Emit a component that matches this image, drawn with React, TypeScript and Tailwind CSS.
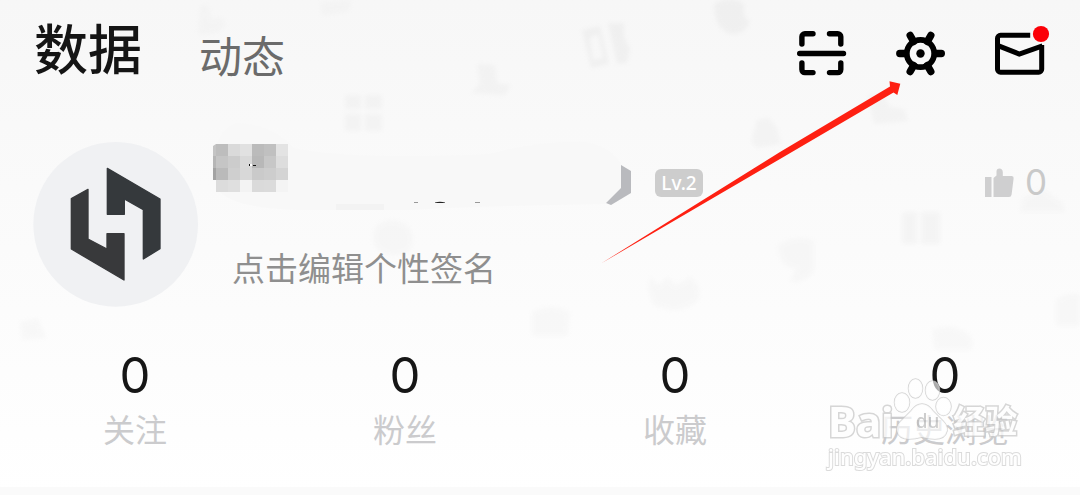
import type { ReactNode } from "react";

const stats = [
  { label: "关注", value: 0 },
  { label: "粉丝", value: 0 },
  { label: "收藏", value: 0 },
  { label: "历史浏览", value: 0 },
];

function Backdrop() {
  return (
    <svg viewBox="0 0 1080 495" className="absolute inset-x-0 top-0 w-full" aria-hidden="true">
      <defs>
        <filter id="soft">
          <feGaussianBlur stdDeviation="2" />
        </filter>
      </defs>
      <g fill="#e6e6e6" opacity="0.2" filter="url(#soft)">
        <path d="M200 5l8 0 4 14 10-2 4 8-8 8-20 2z" />
        <path d="M320 2l32-2-4 12-26 4z" />
        <path d="M345 95h16v14h-16zM365 95h17v14h-17zM345 114h16v17h-16zM365 114h17v17h-17z" fill="#dcdcdc" />
        <path d="M477 64l18 1 2 18 14 2-6 10-34-2 9-9z" fill="#dcdcdc" />
        <path d="M582 30l18-4 9 38-18 4zM590 38l3 22 10-2-5-24zM608 23h16v14l6 12-3 14-10 1z" fillRule="evenodd" fill="#d2d2d2" />
        <path d="M714 4q16-10 30 0v12l6 6q-6 14-20 12-16-6-16-30z" fill="#d2d2d2" />
        <path d="M757 120l12-2 8 10 4 16-24 4-6-6z" fill="#dcdcdc" />
        <path d="M868 95l14-2 8 14 14 2 4 12-34 3z" fill="#dcdcdc" />
        <path d="M902 212h15v32h-15zM921 212h19v32h-19z" fill="#dcdcdc" />
        <path d="M778 245q20-12 36-4v30q-10 14-24 10l6-12q-18-2-18-24z" />
        <path d="M650 277l8 8 10-8 8 8 14-8q14 10 8 24-20 16-44 4-8-12-4-28z" />
        <path d="M376 226q16-12 32 0 10 14 0 26-20 8-32-4-6-10 0-22z" />
        <path d="M532 312q20-10 38 0l-2 24h-36z" />
        <path d="M20 322l18-4 8 20-24 2z" />
        <path d="M1056 300q10-8 24-6v32h-24z" />
        <path d="M932 330q24-10 40 8v12h-38z" />
        <path d="M1022 198l20-10 20 14 4 10h-46z" />
      </g>
    </svg>
  );
}

function ScanIcon() {
  return (
    <svg viewBox="0 0 50 50" className="size-[50px]" fill="none" stroke="#000" strokeWidth="5.4" strokeLinecap="round" aria-hidden="true">
      <path d="M4.9 16V8.7a3 3 0 0 1 3-3H16M32.5 5.7h8.3a3 3 0 0 1 3 3V16M43.8 35v6.6a3 3 0 0 1-3 3h-8.3M16 44.6H7.9a3 3 0 0 1-3-3V35M2.7 25.5h43.8" />
    </svg>
  );
}

function GearIcon() {
  return (
    <svg viewBox="0 0 50 50" className="size-[50px]" fill="none" stroke="#000" aria-hidden="true">
      <path
        d="M3.8 25.500H9M40 25.500h5.300M14.200 7.500l3.400 6M34.800 7.500l-3.400 6M14.200 43.500l3.400-6M34.800 43.500l-3.400-6"
        strokeWidth="7.4"
        strokeLinecap="round"
      />
      <circle cx="24.5" cy="25.5" r="13.7" strokeWidth="5.8" />
      <circle cx="24.5" cy="25.5" r="4.2" fill="#000" stroke="none" />
    </svg>
  );
}

function MailIcon() {
  return (
    <svg viewBox="0 0 50 50" className="size-[50px] overflow-visible" fill="none" stroke="#000" strokeWidth="5" aria-hidden="true">
      <path d="M35.2 7.3H5.5a3 3 0 0 0-3 3v30.900a3 3 0 0 0 3 3h38.200a3 3 0 0 0 3-3V17" />
      <path d="M3 17.600l21.300 8.400L47.500 17.800" />
      <circle cx="46" cy="6" r="8.1" fill="#fb0007" stroke="none" />
    </svg>
  );
}

function IconButton({ label, children }: { label: string; children: ReactNode }) {
  return (
    <button type="button" aria-label={label} className="shrink-0">
      {children}
    </button>
  );
}

function Avatar() {
  return (
    <svg viewBox="39 37 495 495" className="size-[165px] shrink-0" role="img" aria-label="头像">
      <circle cx="287" cy="284" r="247" fill="#f0f1f3" />
      <g strokeWidth="4" strokeLinejoin="round">
        <path d="M262 116L420 208V357L370 388V240L313 208V254H262z" fill="#35393c" stroke="#35393c" />
        <path d="M204 179V328L261 358V312H312V451L154 358V207z" fill="#38393b" stroke="#38393b" />
      </g>
    </svg>
  );
}

const mosaic = [
  ["#bdbdbd", "#dadada", "#e1e1e1", "#bbbbbb", "#c0c0c0", "#e3e3e3"],
  ["#c5c5c5", "#cccccc", "#d9d9d9", "#b8b8b8", "#c7c7c7", "#dddddd"],
  ["#bababa", "#cfcfcf", "#d8d8d8", "#cacaca", "#cdcdcd", "#d4d4d4"],
  ["#dcdcdc", "#dfdfdf", "#f3f3f3", "#dadada", "#dbdbdb", "#f4f4f4"],
];

function MaskedName() {
  return (
    <svg viewBox="0 0 440 90" className="h-[90px] w-[440px] shrink-0" aria-hidden="true">
      <path
        d="M14 34Q20 6 38 3Q72 4 94 28Q150 40 290 34Q340 20 385 22Q412 26 424 48V66L406 84Q280 86 210 90H130Q40 92 20 72Q12 56 14 34z"
        fill="#f8f8f8"
      />
      <path d="M136 84h48v6h-48z" fill="#f3f3f3" />
      <path d="M421 45L431 51V73L411 85L406 83L421 68z" fill="#b9babe" />
      <path d="M13 26l3-2v12h-3z" fill="#c4c4c4" />
      <path d="M13 36h3v12h-3z" fill="#b6b6b6" />
      <path d="M13 48h3v12h-3z" fill="#a3a3a3" />
      {mosaic.map((row, y) =>
        row.map((color, x) => (
          <rect key={`${x}-${y}`} x={16 + x * 12} y={24 + y * 12} width="12" height="12" fill={color} />
        ))
      )}
      <path d="M49 44h1v2h-1zM53 45h3v1h-3z" fill="#111" />
      <path d="M50 44h2v2h-2z" fill="#fff" />
      <path d="M214 82h4v1h-4zM275 82h5v1h-5z" fill="#999" />
      <path d="M235 82.500q5-1.500 10 0v.5h-10z" fill="#222" />
    </svg>
  );
}

function ThumbIcon() {
  return (
    <svg viewBox="0 0 30 32" className="h-8 w-[30px]" fill="#cfcfd0" aria-hidden="true">
      <path d="M0 11h6.500v20H0z" />
      <path d="M8.500 12l3-2.500V5.500q0-3 3-3t3.300 3.500V10h9q2.200.3 1.800 2.500l-2 16q-.4 2.500-2.600 2.500H8.500z" />
    </svg>
  );
}

function Arrow() {
  return (
    <svg viewBox="0 0 1080 495" className="pointer-events-none absolute inset-x-0 top-0 w-full" aria-hidden="true">
      <path d="M601 263.500L780 152L890 86.500L889.500 81.200L900.300 83.800L897.300 95L893.500 92.500L780 159Z" fill="#fe2012" />
    </svg>
  );
}

function Watermark() {
  return (
    <div
      aria-hidden="true"
      className="pointer-events-none absolute right-[59px] bottom-[26px] w-[193px] font-['Noto_Sans','Noto_Sans_CJK_SC',sans-serif] font-bold whitespace-nowrap text-white opacity-75 [-webkit-text-stroke:3px_#c9c9c9] [paint-order:stroke_fill]"
    >
      <svg viewBox="0 0 60 66" className="absolute -top-6 left-[64px] h-[66px] w-[60px]" fill="#fff" fillOpacity="0.85" stroke="#c6c6c6" strokeWidth="1.500">
        <ellipse cx="10" cy="27.500" rx="7.500" ry="9.500" />
        <ellipse cx="23.500" cy="13.500" rx="7" ry="9.500" />
        <ellipse cx="40.500" cy="15.500" rx="7" ry="9.500" />
        <ellipse cx="51.500" cy="31.500" rx="7.500" ry="9" />
        <path d="M30 29q6 0 11 7l10 10q5 5 4 10-2 8-12 8-6 0-13-2-7 2-13 2-10 0-12-8-1-5 4-10l10-10q5-7 11-7z" />
      </svg>
      <div className="relative flex items-center text-[42px] leading-[44px]">
        <span>Bai</span>
        <span className="ml-[22px] text-[19px] font-medium text-[#bdbdbd] [-webkit-text-stroke:0px]">du</span>
        <span className="ml-3.5 text-[32px]">经验</span>
      </div>
      <div className="relative text-[22px] leading-[26px] font-medium [-webkit-text-stroke:2px_#d0d0d0]">jingyan.baidu.com</div>
    </div>
  );
}

export default function App() {
  return (
    <div className="relative overflow-hidden bg-linear-to-b from-[#f7f7f7] via-[#fbfbfb] to-white font-[Inter,'Noto_Sans_CJK_SC',sans-serif]">
      <Backdrop />
      <header className="relative flex h-[106px] items-center justify-between pr-[35px] pl-[34px]">
        <nav className="flex items-center gap-[57px] font-['Noto_Sans_CJK_SC',sans-serif]">
          <a href="#data" className="pb-3 text-[54px] leading-[60px] font-medium text-[#151515]">
            数据
          </a>
          <a href="#feed" className="pt-0.5 text-[43px] leading-[60px] text-[#6b6b6b]">
            动态
          </a>
        </nav>
        <div className="flex items-center gap-[49px]">
          <IconButton label="扫一扫">
            <ScanIcon />
          </IconButton>
          <IconButton label="设置">
            <GearIcon />
          </IconButton>
          <IconButton label="消息">
            <MailIcon />
          </IconButton>
        </div>
      </header>

      <main className="relative">
        <section className="flex pr-[33px] pl-[33px]">
          <div className="pt-9">
            <Avatar />
          </div>
          <div className="min-w-0 flex-1 pt-[14px] pl-0.5">
            <div className="flex">
              <MaskedName />
              <span className="mt-[49px] ml-[15px] flex h-7 w-12 items-center justify-center rounded-md bg-[#cdcdcd] font-['Noto_Sans',sans-serif] text-[19px] font-medium text-white">
                Lv.2
              </span>
              <button type="button" aria-label="获赞" className="mt-11 ml-auto flex h-9 items-center gap-2.5 text-[35px] leading-9 text-[#c9c9c9]">
                <ThumbIcon />
                <span>0</span>
              </button>
            </div>
            <button type="button" className="mt-[37px] ml-8 block font-['Noto_Sans_CJK_SC',sans-serif] text-[33px] leading-10 text-[#8f8f8f]">
              点击编辑个性签名
            </button>
          </div>
        </section>

        <section className="mt-[43px] grid grid-cols-4 pb-[39px]">
          {stats.map((stat) => (
            <a key={stat.label} href="#stats" className="flex flex-col items-center">
              <span className="text-[49px] leading-[52px] text-[#161616]">{stat.value}</span>
              <span className="mt-1.5 font-['Noto_Sans_CJK_SC',sans-serif] text-[32px] leading-10 text-[#cbcbcd]">{stat.label}</span>
            </a>
          ))}
        </section>
      </main>
      <div className="h-2 bg-[#fafafa]" />
      <Watermark />
      <Arrow />
    </div>
  );
}
